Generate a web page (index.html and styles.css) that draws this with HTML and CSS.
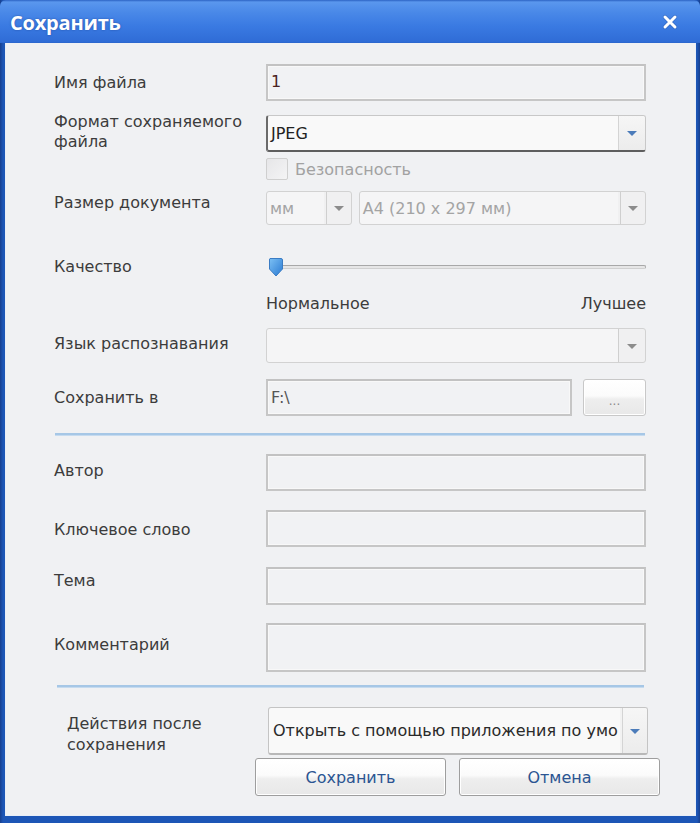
FILE: index.html
```html
<!DOCTYPE html>
<html lang="ru">
<head>
<meta charset="utf-8">
<title>Сохранить</title>
<link rel="stylesheet" href="styles.css">
</head>
<body>
<div class="window">
  <div class="titlebar">
    <span class="title">Сохранить</span>
    <span class="close">
      <svg width="16" height="16" viewBox="0 0 16 16">
        <path d="M3 3 L13 13 M13 3 L3 13" stroke="#16408a" stroke-width="4.2" stroke-linecap="round" opacity="0.35"/>
        <path d="M3 3 L13 13 M13 3 L3 13" stroke="#ffffff" stroke-width="3" stroke-linecap="round"/>
      </svg>
    </span>
  </div>

  <div class="client">
    <div class="row r-name">
      <label class="lbl">Имя файла</label>
      <div class="field input"><span class="val val-red">1</span></div>
    </div>

    <div class="row r-format">
      <label class="lbl lbl-top">Формат сохраняемого<br>файла</label>
      <div class="field combo active">
        <span class="val">JPEG</span>
        <span class="drop"><i class="arrow blue"></i></span>
      </div>
    </div>

    <div class="row r-check">
      <span></span>
      <div class="check-wrap">
        <span class="checkbox"></span>
        <span class="check-text">Безопасность</span>
      </div>
    </div>

    <div class="row r-size">
      <label class="lbl lbl-size">Размер документа</label>
      <div class="size-pair">
        <div class="combo disabled unit">
          <span class="val">мм</span>
          <span class="drop"><i class="arrow grey"></i></span>
        </div>
        <div class="combo disabled paper">
          <span class="val">A4 (210 x 297 мм)</span>
          <span class="drop"><i class="arrow grey"></i></span>
        </div>
      </div>
    </div>

    <div class="row r-quality">
      <label class="lbl">Качество</label>
      <div class="slider">
        <span class="track"></span>
        <svg class="thumb" width="16" height="20" viewBox="0 0 16 20">
          <defs>
            <linearGradient id="thumbFill" x1="0" y1="0" x2="1" y2="1">
              <stop offset="0" stop-color="#7cc0f4"/>
              <stop offset="1" stop-color="#2a7ad2"/>
            </linearGradient>
          </defs>
          <path d="M2 1.5 H13 Q14.5 1.5 14.5 3 V12 L8 19 L1.5 12 V3 Q1.5 1.5 2 1.5 Z" fill="url(#thumbFill)" stroke="#3a7cc4" stroke-width="1"/>
        </svg>
      </div>
    </div>

    <div class="row r-scale">
      <span></span>
      <div class="scale"><span>Нормальное</span><span>Лучшее</span></div>
    </div>

    <div class="row r-lang">
      <label class="lbl lbl-lang">Язык распознавания</label>
      <div class="field combo disabled">
        <span class="val"></span>
        <span class="drop"><i class="arrow grey"></i></span>
      </div>
    </div>

    <div class="row r-path">
      <label class="lbl">Сохранить в</label>
      <div class="path-pair">
        <div class="input path"><span class="val val-grey">F:\</span></div>
        <button class="btn browse">...</button>
      </div>
    </div>

    <div class="sep sep-1"></div>

    <div class="row r-author">
      <label class="lbl lbl-author">Автор</label>
      <div class="field input"></div>
    </div>

    <div class="row r-keyword">
      <label class="lbl lbl-keyword">Ключевое слово</label>
      <div class="field input"></div>
    </div>

    <div class="row r-topic">
      <label class="lbl lbl-topic">Тема</label>
      <div class="field input"></div>
    </div>

    <div class="row r-comment">
      <label class="lbl lbl-comment">Комментарий</label>
      <div class="field input"></div>
    </div>

    <div class="sep sep-2"></div>

    <div class="row r-after">
      <label class="lbl lbl-after">Действия после<br>сохранения</label>
      <div class="field combo active">
        <span class="val">Открыть с помощью приложения по умо</span>
        <span class="drop"><i class="arrow blue"></i></span>
      </div>
    </div>

    <div class="buttons">
      <button class="btn main save">Сохранить</button>
      <button class="btn main cancel">Отмена</button>
    </div>
  </div>
</div>
</body>
</html>
```

FILE: styles.css
```css
* { box-sizing: border-box; }

html, body {
  margin: 0;
  padding: 0;
  background: #ffffff;
}

body {
  font-family: "DejaVu Sans", "Noto Sans", sans-serif;
  font-size: 16px;
  color: #3c3c3c;
}

/* window frame */
.window {
  width: 700px;
  height: 823px;
  display: flex;
  flex-direction: column;
  background: linear-gradient(to right, #173f8e 0, #1d56b6 3px, #1d56b6 calc(100% - 3px), #173f8e 100%);
}

.titlebar {
  height: 43px;
  flex: none;
  display: flex;
  align-items: center;
  justify-content: space-between;
  padding: 0 22px 0 10px;
  background: linear-gradient(to bottom, #2c63c4 0, #5a97ee 2px, #4a89e8 12px, #3a7ae2 26px, #2f6cd6 42px, #2a64c8 43px);
  border-radius: 6px 6px 0 0;
}

.title {
  color: #ffffff;
  font-family: "Open Sans", "Noto Sans", sans-serif;
  font-weight: 700;
  font-size: 20px;
  letter-spacing: -0.2px;
  text-shadow: 0 0 2px rgba(20, 50, 120, 0.6);
  margin-top: 2px;
}

.close {
  display: flex;
  margin-top: 1px;
}

.client {
  flex: 1;
  margin: 0 4px 7px 5px;
  background: #f0f1f3;
  box-shadow: inset 1px 0 0 #e8eef8, inset -1px 0 0 #e8eef8, inset 0 -1px 0 #e8eef8;
  display: flex;
  flex-direction: column;
  padding-left: 49px;
}

/* form rows */
.row {
  display: grid;
  grid-template-columns: 212px 380px;
  align-items: center;
}

.lbl {
  line-height: 20px;
  color: #3c3c3c;
  white-space: nowrap;
}

.lbl-top, .lbl-size, .lbl-author, .lbl-keyword, .lbl-topic, .lbl-comment, .lbl-after {
  align-self: start;
}

.r-name    { height: 37px; margin-top: 21px; }
.r-format  { height: 33px; margin-top: 14px; }
.lbl-top   { margin-top: -3px; }
.r-check   { height: 22px; margin-top: 10px; }
.r-size    { height: 34px; margin-top: 11px; }
.lbl-size  { margin-top: 2px; }
.r-quality { height: 22px; margin-top: 31px; }
.r-scale   { height: 20px; margin-top: 15px; }
.r-lang    { height: 35px; margin-top: 15px; }
.lbl-lang  { margin-top: -3px; }
.r-path    { height: 37px; margin-top: 16px; }
.r-author  { height: 37px; margin-top: 18px; }
.lbl-author { margin-top: 7px; }
.r-keyword { height: 37px; margin-top: 19px; }
.lbl-keyword { margin-top: 10px; }
.r-topic   { height: 38px; margin-top: 20px; }
.lbl-topic { margin-top: 4px; }
.r-comment { height: 49px; margin-top: 18px; }
.lbl-comment { margin-top: 12px; }

.r-after {
  height: 34px;
  margin-top: 19px;
  margin-left: 13px;
  grid-template-columns: 201px 380px;
}
.lbl-after { margin-top: 6px; line-height: 21px; }

.field { height: 100%; }

/* text inputs */
.input {
  height: 100%;
  border: 2px solid #c6c6c6;
  border-top-color: #c2c2c2;
  box-shadow: inset 0 0 0 1px #f8f8f8;
  background: #f1f2f4;
  display: flex;
  align-items: center;
  padding-left: 3px;
}

.val {
  white-space: nowrap;
  overflow: hidden;
  color: #222;
}
.val-red { color: #4a2222; margin-top: -3px; }
.val-grey { color: #555; }

/* comboboxes */
.combo {
  display: flex;
  align-items: stretch;
  border-radius: 2px;
  overflow: hidden;
}

.combo .val {
  flex: 1;
  display: flex;
  align-items: center;
  padding-left: 3px;
}

.combo .drop {
  width: 27px;
  flex: none;
  display: flex;
  align-items: center;
  justify-content: center;
  border-left: 1px solid #cfcfcf;
}

.combo.active {
  border: 1px solid #c8c8c8;
  border-left: 2px solid #6a6a6a;
  border-bottom: 2px solid #5e5e5e;
  border-radius: 3px;
  background: linear-gradient(to right, #f9f9f9, #f9f9f9 calc(100% - 27px), #f2f2f2 calc(100% - 27px));
}
.combo.active .drop {
  border-left: 1px solid #d4d4d4;
  background: linear-gradient(to bottom, #f6f6f6, #ececec);
}

.r-after .combo.active {
  border: 1px solid #c4c4c4;
  border-left: 1px solid #c4c4c4;
  border-bottom: 2px solid #b8b8b8;
  border-radius: 3px;
}
.r-after .combo .val { color: #2a2a2a; padding-left: 4px; }
.r-after .combo .drop { width: 25px; }

.combo.disabled {
  border: 1px solid #d2d2d2;
  border-radius: 3px;
  background: linear-gradient(to right, #f5f5f6, #f5f5f6 calc(100% - 27px), #f0f0f1 calc(100% - 27px));
  color: #a6a6a6;
}
.combo.disabled .val { color: #a4a4a4; }

.arrow {
  width: 0;
  height: 0;
  border-left: 5px solid transparent;
  border-right: 5px solid transparent;
  border-top: 5px solid #888;
  margin-top: 1px;
}
.arrow.blue { border-top-color: #4c7cba; }
.arrow.grey { border-top-color: #8c8c8c; }

/* safety checkbox */
.check-wrap {
  display: flex;
  align-items: center;
  gap: 7px;
  height: 100%;
}
.checkbox {
  width: 22px;
  height: 22px;
  border: 1px solid #cfcfcf;
  border-radius: 2px;
  background: linear-gradient(135deg, #e6e6e8, #f4f4f5);
}
.check-text {
  color: #a2a2a2;
}

/* document size pair */
.size-pair {
  display: flex;
  height: 100%;
  gap: 7px;
}
.size-pair .unit {
  width: 86px;
}
.size-pair .unit .drop { width: 25px; }
.size-pair .paper {
  width: 288px;
}
.size-pair .paper .drop { width: 25px; }

/* quality slider */
.slider {
  position: relative;
  height: 100%;
  display: flex;
  align-items: center;
}
.track {
  display: block;
  margin-left: 4px;
  width: 376px;
  height: 4px;
  border-radius: 2px;
  border: 1px solid #a8a8a8;
  border-bottom-color: #d0d0d0;
  background: #e6e6e6;
}
.thumb {
  position: absolute;
  left: 2px;
  top: 1px;
}

.scale {
  display: flex;
  justify-content: space-between;
  color: #3c3c3c;
}

/* save location */
.path-pair {
  display: flex;
  height: 100%;
  gap: 11px;
}
.input.path {
  width: 306px;
}

.btn {
  font-family: "DejaVu Sans", "Noto Sans", sans-serif;
  font-size: 16px;
  border: 1px solid #b4b4b4;
  border-radius: 3px;
  background: linear-gradient(to bottom, #ffffff 0, #fbfbfb 45%, #eeeeee 55%, #e8e8e8 100%);
  box-shadow: inset 0 0 0 1px #ffffff;
  padding: 0;
  cursor: default;
}

.browse {
  width: 63px;
  height: 100%;
  color: #8a8a8a;
  font-size: 12px;
  padding-top: 6px;
  border-color: #c8c8c8;
}

/* separators */
.sep {
  height: 3px;
  background: #a6c7e6;
  border-bottom: 1px solid #c6dbef;
}
.sep-1 { width: 590px; margin-left: 1px; margin-top: 17px; }
.sep-2 { width: 587px; margin-left: 3px; margin-top: 13px; }

/* dialog buttons */
.buttons {
  display: flex;
  gap: 13px;
  margin-top: 17px;
  margin-left: 201px;
  height: 38px;
}
.btn.main {
  height: 38px;
  color: #2b5592;
  border-color: #9e9e9e;
}
.save { width: 191px; }
.cancel { width: 201px; }
```
